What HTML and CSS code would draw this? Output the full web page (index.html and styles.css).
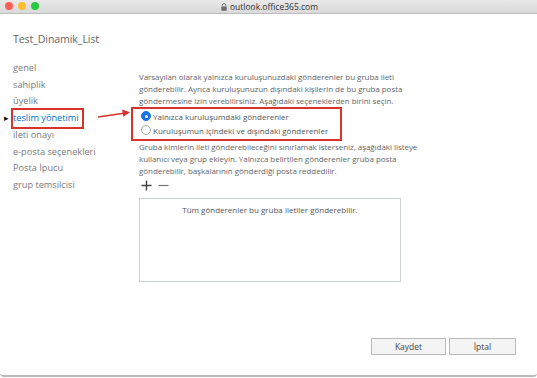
FILE: index.html
```html
<!DOCTYPE html>
<html lang="tr">
<head>
  <meta charset="UTF-8">
  <meta name="viewport" content="width=device-width, initial-scale=1.0">
  <title>outlook.office365.com</title>
  <link rel="stylesheet" href="styles.css">
</head>
<body>

  <div class="window">
    <div class="titlebar">
      <div class="lights">
        <span class="light red"></span>
        <span class="light yellow"></span>
        <span class="light green"></span>
      </div>
      <div class="url">
        <svg class="lock" width="6" height="8" viewBox="0 0 6 8">
          <path d="M1.2 3.5V2.4a1.8 1.8 0 0 1 3.6 0v1.1" fill="none" stroke="#6b6b6b" stroke-width="0.9"/>
          <rect x="0.3" y="3.4" width="5.4" height="4.3" rx="0.6" fill="#6b6b6b"/>
        </svg>
        outlook.office365.com
      </div>
    </div>

    <div class="content">
      <h1 class="page-title">Test_Dinamik_List</h1>

      <div class="layout">
        <ul class="nav">
          <li>genel</li>
          <li>sahiplik</li>
          <li>üyelik</li>
          <li class="active"><span class="pointer">&#9656;</span>teslim yönetimi</li>
          <li>ileti onayı</li>
          <li>e-posta seçenekleri</li>
          <li>Posta İpucu</li>
          <li>grup temsilcisi</li>
        </ul>

        <!-- annotation arrow -->
        <svg class="arrow" width="36" height="14" viewBox="0 0 36 14">
          <line x1="1" y1="10" x2="27" y2="6.2" stroke="#d8322d" stroke-width="1.6"/>
          <polygon points="33,5.3 25,2.4 26.4,9.8" fill="#d8322d"/>
        </svg>

        <div class="main">
          <p class="text">Varsayılan olarak yalnızca kuruluşunuzdaki gönderenler bu gruba ileti gönderebilir. Ayrıca kuruluşunuzun dışındaki kişilerin de bu gruba posta göndermesine izin verebilirsiniz. Aşağıdaki seçeneklerden birini seçin.</p>

          <div class="options">
            <label class="option"><span class="radio checked"></span>Yalnızca kuruluşumdaki gönderenler</label>
            <label class="option"><span class="radio"></span>Kuruluşumun içindeki ve dışındaki gönderenler</label>
          </div>

          <p class="text">Gruba kimlerin ileti gönderebileceğini sınırlamak isterseniz, aşağıdaki listeye kullanıcı veya grup ekleyin. Yalnızca belirtilen gönderenler gruba posta gönderebilir, başkalarının gönderdiği posta reddedilir.</p>

          <div class="tools">
            <svg width="11" height="11" viewBox="0 0 11 11"><path d="M5.5 0.5v10M0.5 5.5h10" stroke="#444" stroke-width="1.4"/></svg>
            <svg width="11" height="11" viewBox="0 0 11 11"><path d="M0.5 5.5h10" stroke="#777" stroke-width="1.2"/></svg>
          </div>

          <div class="list-box">Tüm gönderenler bu gruba iletiler gönderebilir.</div>
        </div>
      </div>
    </div>

    <div class="footer">
      <button class="btn btn-save">Kaydet</button>
      <button class="btn btn-cancel">İptal</button>
    </div>
  </div>

</body>
</html>
```

FILE: styles.css
```css
* {
  box-sizing: border-box;
  margin: 0;
  padding: 0;
}

body {
  width: 537px;
  height: 378px;
  overflow: hidden;
  background-color: #fff;
  font-family: 'Open Sans', 'Noto Sans', sans-serif;
  color: #666;
}

.window {
  height: 377px;
  display: flex;
  flex-direction: column;
  border-bottom: 2px solid #b9b9b9;
  border-bottom-right-radius: 4px;
  border-bottom-left-radius: 4px;
}

.titlebar {
  height: 14px;
  background: linear-gradient(#e9e9e9, #d9d9d9);
  border-bottom: 1px solid #bdbdbd;
  position: relative;
  display: flex;
  align-items: center;
  justify-content: center;
}

.lights {
  position: absolute;
  left: 5px;
  top: 2px;
  display: flex;
  gap: 5px;
}

.light {
  width: 8px;
  height: 8px;
  border-radius: 50%;
}

.red { background-color: #fd5f57; }
.yellow { background-color: #febc2e; }
.green { background-color: #28c840; }

.url {
  font-size: 8.5px;
  color: #333;
  display: flex;
  align-items: center;
  gap: 3px;
  margin-left: 2px;
}

.content {
  flex: 1;
  padding: 0 0 0 13px;
}

.page-title {
  font-size: 10.6px;
  font-weight: normal;
  color: #666;
  line-height: 16px;
  margin-top: 17px;
  letter-spacing: -0.1px;
}

.layout {
  display: flex;
  margin-top: 13px;
  position: relative;
}

.nav {
  list-style: none;
  width: 126px;
  flex-shrink: 0;
  font-size: 9.2px;
  line-height: 16.7px;
  color: #7a7a7a;
}

.nav li {
  position: relative;
  white-space: nowrap;
  width: max-content;
}

.nav li.active {
  color: #0072c6;
  outline: 2px solid #d8322d;
  outline-offset: 0px;
  padding-right: 3px;
}

.pointer {
  position: absolute;
  left: -9px;
  top: 0;
  font-size: 9px;
  color: #111;
}

.arrow {
  position: absolute;
  left: 84px;
  top: 47px;
}

.main {
  padding-top: 11px;
  width: 290px;
}

.text {
  font-size: 8px;
  line-height: 12px;
  color: #666;
  letter-spacing: -0.05px;
}

.options {
  margin-left: -8px;
  width: 211px;
  border: 2px solid #d8322d;
  padding: 0 0 2px 8px;
}

.option {
  display: flex;
  align-items: center;
  height: 14px;
  font-size: 8px;
  color: #555;
  white-space: nowrap;
}

.radio {
  width: 10px;
  height: 10px;
  border-radius: 50%;
  border: 1px solid #aaa;
  background-color: #fff;
  margin-right: 2px;
  position: relative;
}

.radio.checked {
  border-color: #1a73e8;
  background-color: #1a73e8;
}

.radio.checked::after {
  content: "";
  position: absolute;
  left: 2.5px;
  top: 2.5px;
  width: 3px;
  height: 3px;
  border-radius: 50%;
  background-color: #fff;
}

.tools {
  display: flex;
  gap: 6px;
  margin: 3px 0 7px 2px;
}

.list-box {
  width: 262px;
  height: 84px;
  border: 1px solid #ccd1d4;
  text-align: center;
  font-size: 8px;
  color: #555;
  padding-top: 5px;
}

.footer {
  display: flex;
  justify-content: flex-end;
  gap: 3px;
  padding: 0 21px 20px 0;
}

.btn {
  height: 17px;
  background-color: #f4f4f4;
  border: 1px solid #b9b9b9;
  font-family: 'Open Sans', 'Noto Sans', sans-serif;
  font-size: 8.5px;
  color: #444;
}

.btn-save { width: 75px; }
.btn-cancel { width: 67px; }
```
